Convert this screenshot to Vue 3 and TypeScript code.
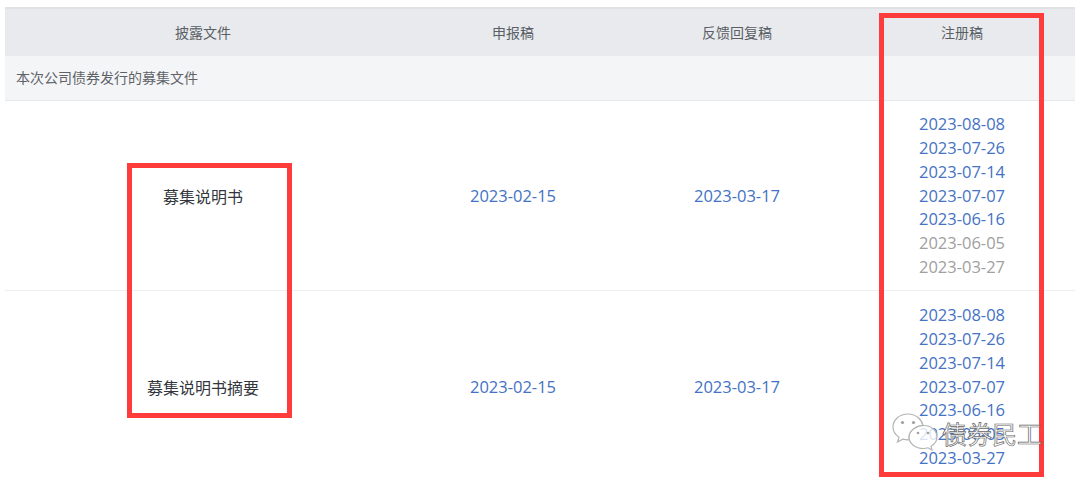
<script setup lang="ts">
interface DateItem { text: string; muted?: boolean }
interface Row { name: string; filing: string; feedback: string; dates: DateItem[] }
const rows: Row[] = [
  {
    name: '募集说明书', filing: '2023-02-15', feedback: '2023-03-17',
    dates: [
      { text: '2023-08-08' }, { text: '2023-07-26' }, { text: '2023-07-14' }, { text: '2023-07-07' },
      { text: '2023-06-16' }, { text: '2023-06-05', muted: true }, { text: '2023-03-27', muted: true },
    ],
  },
  {
    name: '募集说明书摘要', filing: '2023-02-15', feedback: '2023-03-17',
    dates: [
      { text: '2023-08-08' }, { text: '2023-07-26' }, { text: '2023-07-14' }, { text: '2023-07-07' },
      { text: '2023-06-16' }, { text: '2023-06-05' }, { text: '2023-03-27' },
    ],
  },
]
</script>

<template>
  <div class="page">
    <div class="table">
      <div class="row head">
        <div>披露文件</div><div>申报稿</div><div>反馈回复稿</div><div>注册稿</div>
      </div>
      <div class="section">本次公司债券发行的募集文件</div>
      <div v-for="r in rows" :key="r.name" class="row body">
        <div class="name">{{ r.name }}</div>
        <div class="link">{{ r.filing }}</div>
        <div class="link">{{ r.feedback }}</div>
        <div class="dates">
          <span v-for="d in r.dates" :key="d.text" :class="d.muted ? 'muted' : 'link'">{{ d.text }}</span>
        </div>
      </div>
    </div>

    <div class="mark mark-a"></div>
    <div class="mark mark-b"></div>

    <div class="wm">
      <svg class="wm-icon" width="46" height="38" viewBox="0 0 46 38" fill="none" stroke="#b4b4b4" stroke-width="1.2">
        <path fill="rgba(255,255,255,.8)" d="M16 1C7.500 1 1 6.800 1 14c0 4.200 2.200 7.700 6 10.200L5.500 29l5.300-2.900c1.700.5 3.400.8 5.200.8h1.200C16 19 23 12.500 31 12.500 29.500 6 23.500 1 16 1z"/>
        <path fill="rgba(255,255,255,.8)" d="M45 24c0-6.500-6-11.500-13-11.500S17 17.500 17 24s6.500 11.500 14.500 11.500c1.700 0 3-.2 4.500-.7l4 2.200-1-3.700C42.800 31 45 27.800 45 24z"/>
        <circle cx="10.500" cy="9.500" r="1.600" fill="#a0a0a0" stroke="none"/>
        <circle cx="21.500" cy="9.500" r="1.600" fill="#a0a0a0" stroke="none"/>
        <circle cx="26" cy="20" r="1.300" fill="#a0a0a0" stroke="none"/>
        <circle cx="36" cy="20" r="1.300" fill="#a0a0a0" stroke="none"/>
      </svg>
      <span class="wm-text">债券民工</span>
    </div>
  </div>
</template>

<style scoped>
.page {
  position: relative;
  width: 1080px;
  height: 481px;
  overflow: hidden;
  background: #fff;
  font-family: "Open Sans", "Noto Sans CJK SC", sans-serif;
}
.table {
  margin-left: 5px;
  padding-top: 7px;
  width: 1070px;
}
.row {
  display: grid;
  grid-template-columns: 396px 224px 224px 226px;
  text-align: center;
}
.head {
  height: 49px;
  padding-bottom: 2px;
  background: #e8eaed;
  border-top: 2px solid #dfe1e5;
  box-sizing: border-box;
  align-items: center;
  font-size: 14px;
  color: #5a5f66;
}
.section {
  height: 44px;
  line-height: 44px;
  padding-left: 11px;
  background: #f4f5f7;
  border-bottom: 1px solid #e6e8eb;
  font-size: 14px;
  color: #5f6368;
}
.body {
  height: 189px;
  align-items: center;
  border-bottom: 1px solid #eceef0;
  font-size: 16.5px;
}
.body:last-child {
  height: 191px;
  border-bottom: 0;
}
.name {
  font-size: 16px;
  color: #33373d;
}
.link { color: #4472c4; }
.muted { color: #a0a0a0; }
.dates {
  display: flex;
  flex-direction: column;
  line-height: 23.8px;
}
.mark {
  position: absolute;
  box-sizing: border-box;
  border: 5px solid #ff3b3b;
}
.mark-a { left: 127px; top: 163px; width: 165px; height: 255px; }
.mark-b { left: 879px; top: 13px; width: 165px; height: 464px; }
.wm {
  position: absolute;
  left: 892px;
  top: 413px;
  display: flex;
  align-items: flex-start;
}
.wm-icon { flex: none; }
.wm-text {
  margin-left: 4px;
  margin-top: 3px;
  font-size: 25px;
  line-height: 34px;
  white-space: nowrap;
  color: #fff;
  font-family: "Noto Sans CJK SC", sans-serif;
  -webkit-text-stroke: .7px #666;
}
</style>
